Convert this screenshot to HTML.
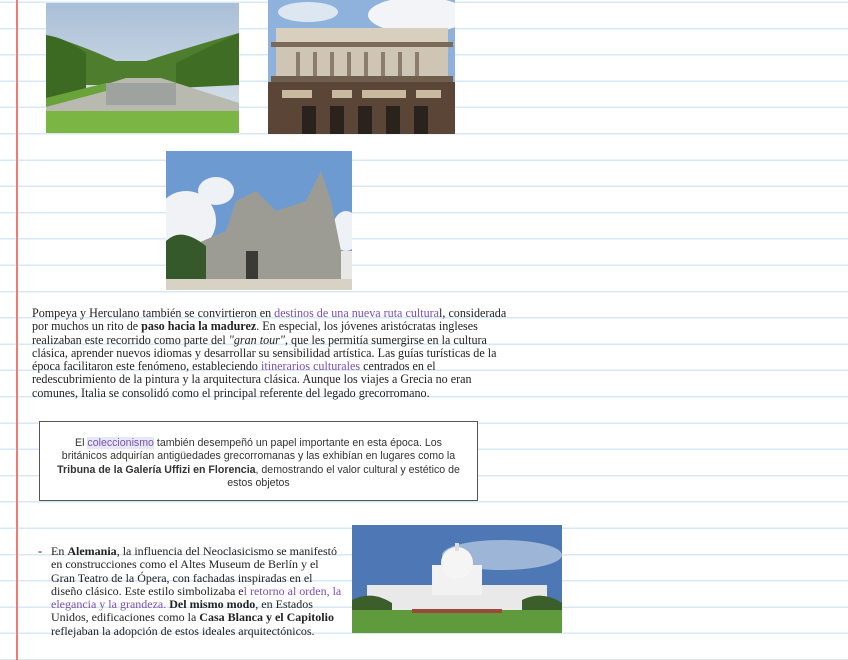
<!DOCTYPE html>
<html><head><meta charset="utf-8"><style>
*{margin:0;padding:0;box-sizing:border-box}
body{width:848px;height:660px;overflow:hidden;position:relative;background:#fff;
background-image:repeating-linear-gradient(to bottom,transparent 0,transparent 1.5px,#d7e8f6 1.5px,#d7e8f6 3px,transparent 3px,transparent 26.3px);}
.red{position:absolute;left:16px;top:0;width:1.5px;height:660px;background:#f07a74}
.img{position:absolute;overflow:hidden}
.p{position:absolute;font-family:"Liberation Serif",serif;font-size:12.1px;line-height:13.3px;color:#222;white-space:nowrap}
.pu{color:#7a4fb0}
.box{position:absolute;left:39px;top:421px;width:439px;height:80px;border:1.3px solid #555;background:#fff;
font-family:"Liberation Sans",sans-serif;font-size:10.6px;line-height:13.3px;color:#333;text-align:center;padding-top:15px;white-space:nowrap}
</style></head><body>
<div class="red"></div>

<svg class="img" style="left:46px;top:3px" width="193" height="130" viewBox="0 0 193 130">
<defs><linearGradient id="s1" x1="0" y1="0" x2="0" y2="1"><stop offset="0" stop-color="#a9bfd6"/><stop offset="1" stop-color="#dfe6ee"/></linearGradient></defs>
<rect width="193" height="130" fill="url(#s1)"/>
<path d="M0 32 Q30 40 70 58 L100 58 Q140 45 193 30 L193 82 L0 82Z" fill="#4f7d2e"/>
<path d="M0 32 Q20 35 40 50 L40 90 L0 95Z" fill="#3d6a22"/>
<path d="M193 30 Q160 45 130 60 L130 85 L193 82Z" fill="#3f6d24"/>
<path d="M0 100 L80 75 L115 75 L193 100 L193 110 L0 110Z" fill="#b8bab0"/>
<rect x="60" y="80" width="70" height="22" fill="#9ea3a0"/>
<rect y="108" width="193" height="22" fill="#7bb543"/>
<path d="M0 95 L60 80 L60 88 L0 104Z" fill="#6aa33a"/>
</svg>

<svg class="img" style="left:268px;top:0" width="187" height="134" viewBox="0 0 187 134">
<rect width="187" height="134" fill="#8fb2dc"/>
<ellipse cx="150" cy="15" rx="50" ry="18" fill="#f2f4f7"/>
<ellipse cx="40" cy="12" rx="30" ry="10" fill="#dde7f2"/>
<rect x="8" y="28" width="172" height="15" fill="#d9cfbe"/>
<rect x="3" y="42" width="182" height="5" fill="#7c6a58"/>
<rect x="8" y="47" width="172" height="30" fill="#cfc5b5"/>
<g fill="#8a7d6c"><rect x="28" y="52" width="4" height="25"/><rect x="45" y="52" width="4" height="25"/><rect x="62" y="52" width="4" height="25"/><rect x="79" y="52" width="4" height="25"/><rect x="96" y="52" width="4" height="25"/><rect x="113" y="52" width="4" height="25"/><rect x="130" y="52" width="4" height="25"/><rect x="147" y="52" width="4" height="25"/></g>
<rect x="3" y="76" width="182" height="6" fill="#6e5e4e"/>
<rect x="0" y="82" width="187" height="52" fill="#5b4536"/>
<g fill="#c9b9a0"><rect x="14" y="90" width="30" height="8"/><rect x="64" y="90" width="20" height="8"/><rect x="94" y="90" width="44" height="8"/><rect x="148" y="90" width="25" height="8"/></g>
<g fill="#2a221c"><rect x="34" y="106" width="14" height="28"/><rect x="62" y="106" width="14" height="28"/><rect x="90" y="106" width="14" height="28"/><rect x="118" y="106" width="14" height="28"/><rect x="146" y="106" width="14" height="28"/></g>
</svg>

<svg class="img" style="left:166px;top:151px" width="186" height="139" viewBox="0 0 186 139">
<rect width="186" height="139" fill="#6d9ad0"/>
<ellipse cx="20" cy="70" rx="30" ry="30" fill="#f0f2f5"/>
<ellipse cx="50" cy="40" rx="18" ry="14" fill="#eef1f5"/>
<ellipse cx="180" cy="80" rx="14" ry="20" fill="#eef1f5"/>
<path d="M20 135 L25 95 L60 80 L70 50 L90 40 L110 60 L140 50 L155 20 L165 50 L175 100 L180 135Z" fill="#9d9c94"/>
<path d="M0 90 Q15 75 40 95 L40 130 L0 130Z" fill="#35592a"/>
<rect x="80" y="100" width="12" height="30" fill="#3a3a36"/>
<rect x="175" y="100" width="11" height="35" fill="#e8e8e6"/>
<rect y="128" width="186" height="11" fill="#d8d2c4"/>
</svg>

<div class="p" style="left:32px;top:307px">Pompeya y Herculano también se convirtieron en <span class="pu">destinos de una nueva ruta cultura</span>l, considerada<br>por muchos un rito de <b>paso hacia la madurez</b>. En especial, los jóvenes aristócratas ingleses<br>realizaban este recorrido como parte del <i>"gran tour"</i>, que les permitía sumergirse en la cultura<br>clásica, aprender nuevos idiomas y desarrollar su sensibilidad artística. Las guías turísticas de la<br>época facilitaron este fenómeno, estableciendo <span class="pu">itinerarios culturales</span> centrados en el<br>redescubrimiento de la pintura y la arquitectura clásica. Aunque los viajes a Grecia no eran<br>comunes, Italia se consolidó como el principal referente del legado grecorromano.</div>

<div class="box">El <span style="color:#7a4fb0;background:#e6e8f6">coleccionismo</span> también desempeñó un papel importante en esta época. Los<br>británicos adquirían antigüedades grecorromanas y las exhibían en lugares como la<br><b>Tribuna de la Galería Uffizi en Florencia</b>, demostrando el valor cultural y estético de<br>estos objetos</div>

<div class="p" style="left:38px;top:545px">-</div>
<div class="p" style="left:51px;top:545px;font-size:12px">En <b>Alemania</b>, la influencia del Neoclasicismo se manifestó<br>en construcciones como el Altes Museum de Berlín y el<br>Gran Teatro de la Ópera, con fachadas inspiradas en el<br>diseño clásico. Este estilo simbolizaba e<span class="pu">l retorno al orden, la<br>elegancia y la grandeza.</span> <b>Del mismo modo</b>, en Estados<br>Unidos, edificaciones como la <b>Casa Blanca y el Capitolio</b><br>reflejaban la adopción de estos ideales arquitectónicos.</div>

<svg class="img" style="left:352px;top:525px" width="210" height="108" viewBox="0 0 210 108">
<rect width="210" height="108" fill="#4d78b5"/>
<ellipse cx="150" cy="30" rx="60" ry="15" fill="#9db6d8"/>
<rect x="15" y="60" width="180" height="25" fill="#e9e9ea"/>
<rect x="80" y="40" width="50" height="30" fill="#f2f2f2"/>
<ellipse cx="105" cy="38" rx="16" ry="16" fill="#f5f5f5"/>
<rect x="103" y="18" width="4" height="8" fill="#ddd"/>
<path d="M0 75 Q20 65 40 78 L40 90 L0 90Z" fill="#3b5e2b"/>
<path d="M170 75 Q190 65 210 78 L210 90 L170 90Z" fill="#3b5e2b"/>
<rect y="85" width="210" height="23" fill="#5f9a3d"/>
<rect x="60" y="84" width="90" height="4" fill="#9b4a3a"/>
</svg>
</body></html>
